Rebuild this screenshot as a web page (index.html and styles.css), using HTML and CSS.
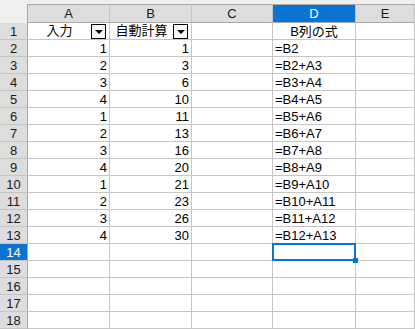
FILE: index.html
```html
<!DOCTYPE html>
<html>
<head>
  <title>Sheet1</title>
  <link rel="stylesheet" href="styles.css">
</head>
<body>
  <div class="sheet">
    <div class="corner"></div>
    <div class="col-head">A</div>
    <div class="col-head">B</div>
    <div class="col-head">C</div>
    <div class="col-head active">D</div>
    <div class="col-head">E</div>

    <div class="row-head">1</div>
    <div class="cell filter"><span class="label">入力</span><span class="drop"></span></div>
    <div class="cell filter"><span class="label">自動計算</span><span class="drop"></span></div>
    <div class="cell"></div>
    <div class="cell center">B列の式</div>
    <div class="cell"></div>

    <div class="row-head">2</div>
    <div class="cell num">1</div><div class="cell num">1</div><div class="cell"></div><div class="cell">=B2</div><div class="cell"></div>
    <div class="row-head">3</div>
    <div class="cell num">2</div><div class="cell num">3</div><div class="cell"></div><div class="cell">=B2+A3</div><div class="cell"></div>
    <div class="row-head">4</div>
    <div class="cell num">3</div><div class="cell num">6</div><div class="cell"></div><div class="cell">=B3+A4</div><div class="cell"></div>
    <div class="row-head">5</div>
    <div class="cell num">4</div><div class="cell num">10</div><div class="cell"></div><div class="cell">=B4+A5</div><div class="cell"></div>
    <div class="row-head">6</div>
    <div class="cell num">1</div><div class="cell num">11</div><div class="cell"></div><div class="cell">=B5+A6</div><div class="cell"></div>
    <div class="row-head">7</div>
    <div class="cell num">2</div><div class="cell num">13</div><div class="cell"></div><div class="cell">=B6+A7</div><div class="cell"></div>
    <div class="row-head">8</div>
    <div class="cell num">3</div><div class="cell num">16</div><div class="cell"></div><div class="cell">=B7+A8</div><div class="cell"></div>
    <div class="row-head">9</div>
    <div class="cell num">4</div><div class="cell num">20</div><div class="cell"></div><div class="cell">=B8+A9</div><div class="cell"></div>
    <div class="row-head">10</div>
    <div class="cell num">1</div><div class="cell num">21</div><div class="cell"></div><div class="cell">=B9+A10</div><div class="cell"></div>
    <div class="row-head">11</div>
    <div class="cell num">2</div><div class="cell num">23</div><div class="cell"></div><div class="cell">=B10+A11</div><div class="cell"></div>
    <div class="row-head">12</div>
    <div class="cell num">3</div><div class="cell num">26</div><div class="cell"></div><div class="cell">=B11+A12</div><div class="cell"></div>
    <div class="row-head">13</div>
    <div class="cell num">4</div><div class="cell num">30</div><div class="cell"></div><div class="cell">=B12+A13</div><div class="cell"></div>
    <div class="row-head active">14</div>
    <div class="cell"></div><div class="cell"></div><div class="cell"></div><div class="cell selected"></div><div class="cell"></div>
    <div class="row-head">15</div>
    <div class="cell"></div><div class="cell"></div><div class="cell"></div><div class="cell"></div><div class="cell"></div>
    <div class="row-head">16</div>
    <div class="cell"></div><div class="cell"></div><div class="cell"></div><div class="cell"></div><div class="cell"></div>
    <div class="row-head">17</div>
    <div class="cell"></div><div class="cell"></div><div class="cell"></div><div class="cell"></div><div class="cell"></div>
    <div class="row-head">18</div>
    <div class="cell"></div><div class="cell"></div><div class="cell"></div><div class="cell"></div><div class="cell"></div>
  </div>
</body>
</html>
```
FILE: styles.css
```css
body {
  margin: 0;
  background-color: #efefef;
  font-family: "Liberation Sans", "Noto Sans CJK JP", Arial, sans-serif;
  font-size: 13px;
  color: #000000;
}

.sheet {
  display: grid;
  grid-template-columns: 28px 82px 82px 81px 83px 1fr;
  grid-template-rows: 23px repeat(18, 17px);
  width: 415px;
}

.corner {
  background-color: #efefef;
}

.col-head {
  margin-top: 4px;
  background-color: #dddddd;
  border-top: 1px solid #a9a9a9;
  border-right: 1px solid #c4c4c4;
  border-bottom: 1px solid #a9a9a9;
  text-align: center;
  line-height: 17px;
  color: #1a1a1a;
}

.col-head:nth-child(2) {
  border-left: 1px solid #a9a9a9;
  margin-left: -1px;
}

.row-head {
  background-color: #dddddd;
  border-right: 1px solid #a9a9a9;
  border-bottom: 1px solid #c4c4c4;
  text-align: center;
  line-height: 17px;
  color: #1a1a1a;
}

.active {
  background-color: #0a74d5;
  color: #ffffff;
}

.cell {
  position: relative;
  background-color: #ffffff;
  border-right: 1px solid #c6c6c6;
  border-bottom: 1px solid #c6c6c6;
  line-height: 18px;
  padding: 0 2px;
  white-space: nowrap;
  overflow: visible;
}

.num {
  text-align: right;
}

.center {
  text-align: center;
}

.filter {
  display: flex;
  align-items: center;
  padding: 0 3px 0 0;
}

.filter .label {
  flex: 1;
  text-align: center;
}

.drop {
  position: relative;
  width: 13px;
  height: 13px;
  border: 1px solid #000000;
  background-color: #f6f6f6;
}

.drop::after {
  content: "";
  position: absolute;
  left: 3px;
  top: 5px;
  border-left: 4px solid transparent;
  border-right: 4px solid transparent;
  border-top: 4px solid #000000;
}

.selected::after {
  content: "";
  position: absolute;
  left: -1px;
  top: -1px;
  right: -1px;
  bottom: -1px;
  border: 2px solid #0a74d5;
}

.selected::before {
  content: "";
  position: absolute;
  right: -3px;
  bottom: -3px;
  width: 5px;
  height: 5px;
  background-color: #0a74d5;
  z-index: 1;
}
```
